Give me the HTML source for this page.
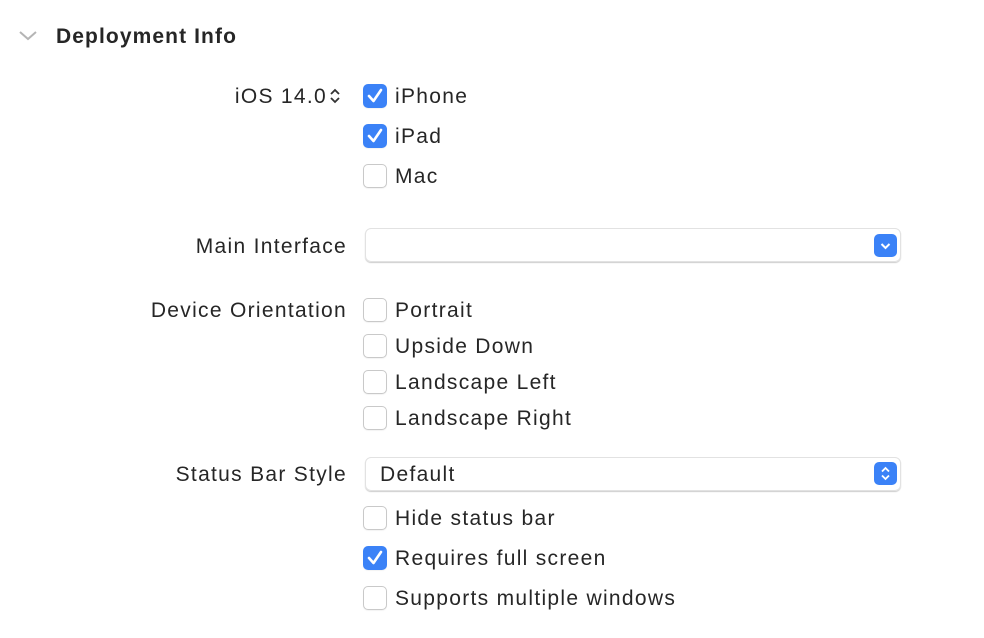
<!DOCTYPE html>
<html><head><style>
body{margin:0;width:984px;height:638px;background:#fff;font-family:"Liberation Sans",sans-serif;color:#262626;position:relative;overflow:hidden}
.a{position:absolute;font-size:21px;line-height:24px;white-space:nowrap;letter-spacing:1.3px;margin-top:1px}
.r{text-align:right;width:347px;left:0}
.cb{position:absolute;left:363px;width:22px;height:22px;border:1px solid #c9c9c9;border-radius:5px;background:#fff;box-shadow:0 1px 1px rgba(0,0,0,.05)}
.cb.on{background:#3b82f7;border-color:#3b82f7}
.cb svg{position:absolute;left:3px;top:3px}
.pop{position:absolute;left:365px;width:534px;height:32px;border:1px solid #e2e2e2;border-radius:6px;box-shadow:0 1px 1px rgba(0,0,0,.2)}
.btn{position:absolute;right:3px;top:5px;width:23px;height:23px;border-radius:5px;background:#3b82f7}
</style></head><body>
<svg style="position:absolute;left:18px;top:29px" width="20" height="14"><path d="M2 3 L10 10 L18 3" stroke="#b5b5b5" stroke-width="2" fill="none"/></svg>
<div class="a" style="left:56px;top:24px;font-weight:bold;letter-spacing:1.1px">Deployment Info</div>

<div class="a" style="left:0;width:327px;text-align:right;top:84px">iOS 14.0</div>
<svg style="position:absolute;left:329px;top:87px" width="12" height="18"><path d="M2 7 L6 3 L10 7 M2 11 L6 15 L10 11" stroke="#333" stroke-width="1.8" fill="none"/></svg>

<div class="cb on" style="top:84px"><svg width="16" height="16"><path d="M2 8 L6.5 13 L14 2" stroke="#fff" stroke-width="2.6" fill="none" stroke-linecap="round" stroke-linejoin="round"/></svg></div>
<div class="a" style="left:395px;top:84px">iPhone</div>
<div class="cb on" style="top:124px"><svg width="16" height="16"><path d="M2 8 L6.5 13 L14 2" stroke="#fff" stroke-width="2.6" fill="none" stroke-linecap="round" stroke-linejoin="round"/></svg></div>
<div class="a" style="left:395px;top:124px">iPad</div>
<div class="cb" style="top:164px"></div>
<div class="a" style="left:395px;top:164px">Mac</div>

<div class="a r" style="top:234px">Main Interface</div>
<div class="pop" style="top:228px"><div class="btn"><svg width="23" height="23"><path d="M7.5 10 L11.5 14 L15.5 10" stroke="#fff" stroke-width="2" fill="none"/></svg></div></div>

<div class="a r" style="top:298px">Device Orientation</div>
<div class="cb" style="top:298px"></div><div class="a" style="left:395px;top:298px">Portrait</div>
<div class="cb" style="top:334px"></div><div class="a" style="left:395px;top:334px">Upside Down</div>
<div class="cb" style="top:370px"></div><div class="a" style="left:395px;top:370px">Landscape Left</div>
<div class="cb" style="top:406px"></div><div class="a" style="left:395px;top:406px">Landscape Right</div>

<div class="a r" style="top:462px">Status Bar Style</div>
<div class="pop" style="top:457px"><div class="a" style="left:14px;top:4px">Default</div><div class="btn" style="top:4px"><svg width="23" height="23"><path d="M8 9.5 L11.5 6 L15 9.5 M8 13.5 L11.5 17 L15 13.5" stroke="#fff" stroke-width="1.8" fill="none"/></svg></div></div>

<div class="cb" style="top:506px"></div><div class="a" style="left:395px;top:506px">Hide status bar</div>
<div class="cb on" style="top:546px"><svg width="16" height="16"><path d="M2 8 L6.5 13 L14 2" stroke="#fff" stroke-width="2.6" fill="none" stroke-linecap="round" stroke-linejoin="round"/></svg></div><div class="a" style="left:395px;top:546px">Requires full screen</div>
<div class="cb" style="top:586px"></div><div class="a" style="left:395px;top:586px">Supports multiple windows</div>
</body></html>
